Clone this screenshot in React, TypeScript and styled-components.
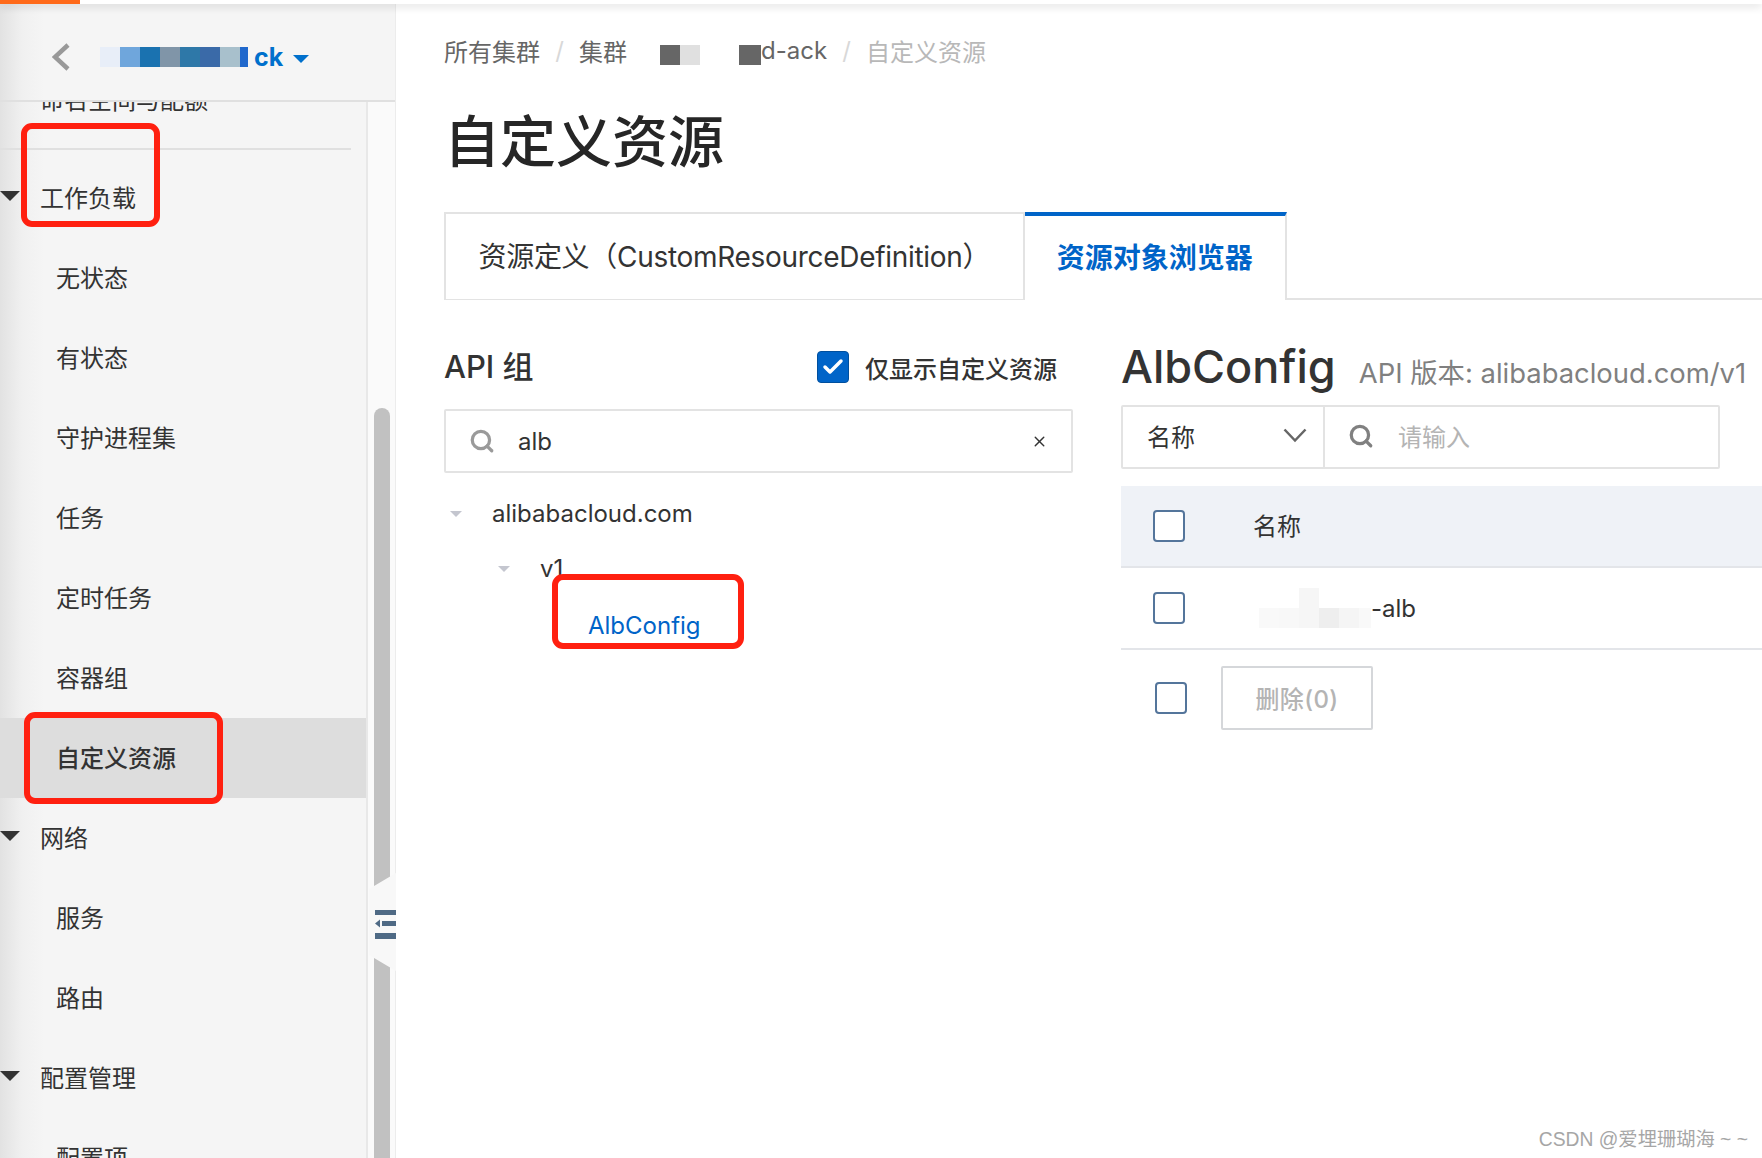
import React from 'react';
import styled, { createGlobalStyle } from 'styled-components';
import { Check, Search, X } from 'lucide-react';

const GlobalStyle = createGlobalStyle`
  html, body {
    margin: 0;
    padding: 0;
    background: #fff;
    font-family: Inter, "Noto Sans CJK SC", sans-serif;
    color: #333;
  }
  * {
    box-sizing: border-box;
  }
`;

const Page = styled.div`
  position: relative;
  display: flex;
  flex-direction: column;
  width: 1762px;
  height: 1158px;
  overflow: hidden;
`;

const TopStrip = styled.div`
  position: relative;
  z-index: 2;
  flex: none;
  height: 4px;
  background: #fff;
  box-shadow: 0 2px 8px rgba(0, 0, 0, 0.18);
`;

const TopAccent = styled.div`
  width: 80px;
  height: 4px;
  background: #ff6a1a;
`;

const Body = styled.div`
  flex: 1;
  display: flex;
  min-height: 0;
`;

const Sidebar = styled.aside`
  position: relative;
  flex: none;
  display: flex;
  flex-direction: column;
  width: 396px;
  background: linear-gradient(90deg, #e2e2e2 0, #f0f0f0 22px, #f5f5f5 44px);
  border-right: 1px solid #ececec;
`;

const SideHeader = styled.div`
  flex: none;
  display: flex;
  align-items: center;
  gap: 30px;
  height: 98px;
  padding: 9px 0 0 52px;
  border-bottom: 2px solid #e0e0e0;
`;

const ClusterName = styled.div`
  display: flex;
  align-items: center;
  height: 30px;
  color: #0070cc;
  font-size: 25px;
  font-weight: 700;
`;

const ClusterTail = styled.span`
  margin-left: 6px;
`;

const Mosaic = styled.span`
  display: inline-flex;
  align-items: flex-end;
  flex: none;
`;

const CrumbMosaic = styled(Mosaic)<{ $gap: number }>`
  margin: 10px 0 0 ${p => p.$gap}px;
`;

const Cell = styled.i<{ $c: string; $w?: number; $h?: number }>`
  display: block;
  width: ${p => p.$w ?? 20}px;
  height: ${p => p.$h ?? 20}px;
  background: ${p => p.$c};
`;

const Caret = styled.svg`
  margin-left: 10px;
  margin-top: 4px;
`;

const SideBody = styled.div`
  flex: 1;
  display: flex;
  min-height: 0;
`;

const MenuColumn = styled.nav`
  flex: none;
  width: 368px;
  overflow: hidden;
  border-right: 2px solid #e8e8e8;
`;

const MenuList = styled.div`
  margin-top: -42px;
`;

const MenuItem = styled.div<{ $level: number; $active?: boolean }>`
  position: relative;
  display: flex;
  align-items: center;
  height: 80px;
  padding: 0 0 3px ${p => (p.$level === 0 ? 40 : 56)}px;
  font-size: 24px;
  font-weight: ${p => (p.$active ? 500 : 400)};
  color: #333;
  background: ${p => (p.$active ? '#dddddd' : 'transparent')};
`;

const MenuArrow = styled.span`
  position: absolute;
  left: 0;
  top: 33px;
  width: 0;
  height: 0;
  border-left: 10px solid transparent;
  border-right: 10px solid transparent;
  border-top: 10px solid #333;
`;

const MenuDivider = styled.div`
  height: 2px;
  width: 351px;
  margin: 8px 0;
  background: #e0e0e0;
`;

const ScrollTrack = styled.div`
  flex: 1;
  padding: 306px 5px 0 6px;
  background: #fafafa;
`;

const ScrollThumb = styled.div`
  height: 800px;
  border-radius: 8px 8px 0 0;
  background: #c1c1c1;
`;

const CollapseHandle = styled.div`
  position: absolute;
  left: 369px;
  top: 869px;
  display: flex;
  align-items: center;
  justify-content: flex-end;
  width: 27px;
  height: 98px;
  padding-top: 5px;
  background: #f8f8f8;
  clip-path: polygon(0 16px, 100% 0, 100% 100%, 0 82px);
`;

const Main = styled.main`
  flex: 1;
  min-width: 0;
  overflow: hidden;
  padding: 29px 0 0 48px;
`;

const Breadcrumb = styled.div`
  display: flex;
  align-items: center;
  height: 34px;
  font-size: 24px;
  color: #666;
  white-space: nowrap;
`;

const Slash = styled.span`
  width: 39px;
  text-align: center;
  color: #d8d8d8;
`;

const CrumbCurrent = styled.span`
  color: #b8b8b8;
`;

const PageTitle = styled.h1`
  margin: 40px 0 0;
  height: 70px;
  font-size: 56px;
  line-height: 70px;
  font-weight: 500;
  color: #262626;
`;

const Tabs = styled.div`
  display: flex;
  height: 88px;
  margin-top: 35px;
  border-bottom: 2px solid #e3e3e3;
`;

const Tab = styled.div<{ $active?: boolean }>`
  display: flex;
  align-items: center;
  height: ${p => (p.$active ? 88 : 87)}px;
  padding: 0 ${p => (p.$active ? 32 : 32.5)}px 4px;
  font-size: 28px;
  font-weight: ${p => (p.$active ? 600 : 400)};
  letter-spacing: ${p => (p.$active ? 0 : -0.3)}px;
  color: ${p => (p.$active ? '#0064c8' : '#333')};
  background: #fff;
  white-space: nowrap;
  border: solid #e3e3e3;
  border-width: ${p => (p.$active ? '4px 2px 0 0' : '2px 2px 0 2px')};
  border-top-color: ${p => (p.$active ? '#0064c8' : '#e3e3e3')};
`;

const Panels = styled.div`
  display: flex;
  gap: 48px;
  margin-top: 38px;
`;

const LeftPanel = styled.section`
  flex: none;
  width: 629px;
`;

const RightPanel = styled.section`
  flex: 1;
  min-width: 0;
`;

const GroupHeader = styled.div`
  display: flex;
  align-items: center;
  justify-content: space-between;
  height: 54px;
  padding-right: 16px;
`;

const GroupTitle = styled.h2`
  margin: 0 0 2px;
  font-size: 31px;
  font-weight: 500;
  color: #333;
`;

const OnlyCustom = styled.div`
  display: flex;
  align-items: center;
  gap: 16px;
  margin-top: 4px;
  font-size: 24px;
  font-weight: 500;
`;

const CheckedBox = styled.span`
  display: flex;
  align-items: center;
  justify-content: center;
  width: 32px;
  height: 32px;
  border-radius: 4px;
  background: #0064c8;
  border: 1px solid #004f9e;
  color: #fff;
`;

const SearchBox = styled.div`
  display: flex;
  align-items: center;
  height: 64px;
  margin-top: 17px;
  padding: 0 23px;
  border: 2px solid #e3e3e3;
  border-radius: 2px;
  color: #9a9a9a;
`;

const SearchValue = styled.span`
  flex: 1;
  margin-left: 23px;
  color: #333;
  font-size: 24px;
`;

const Tree = styled.div`
  margin-top: 13px;
`;

const TreeRow = styled.div<{ $level: number; $link?: boolean }>`
  display: flex;
  align-items: center;
  height: ${p => (p.$link ? 58 : 55)}px;
  margin-left: ${p => p.$level * 48}px;
  font-size: 24px;
  color: ${p => (p.$link ? '#0064c8' : '#333')};
`;

const TreeArrow = styled.span`
  flex: none;
  width: 0;
  height: 0;
  margin: 0 30px 0 6px;
  border-left: 6px solid transparent;
  border-right: 6px solid transparent;
  border-top: 6px solid #c4c6cf;
`;

const TitleRow = styled.div`
  display: flex;
  align-items: baseline;
  gap: 23px;
  height: 54px;
  padding-top: 2px;
  white-space: nowrap;
`;

const ObjectTitle = styled.h2`
  margin: 0;
  font-size: 45px;
  line-height: 54px;
  font-weight: 500;
  color: #333;
`;

const ApiVersion = styled.span`
  font-size: 27.4px;
  color: #808080;
`;

const FilterBar = styled.div`
  display: flex;
  width: 599px;
  height: 64px;
  margin-top: 13px;
  border: 2px solid #e3e3e3;
  border-radius: 2px;
  font-size: 24px;
`;

const FilterSelect = styled.div`
  flex: none;
  display: flex;
  align-items: center;
  justify-content: space-between;
  width: 202px;
  padding: 0 16px 3px 24px;
  border-right: 2px solid #e3e3e3;
  color: #333;
`;

const FilterInput = styled.div`
  flex: 1;
  display: flex;
  align-items: center;
  gap: 24px;
  padding: 0 0 3px 23px;
  color: #b4b4b4;
`;

const Table = styled.div`
  margin-top: 17px;
`;

const TableRow = styled.div<{ $head?: boolean }>`
  display: flex;
  align-items: center;
  height: 82px;
  padding-left: 32px;
  font-size: 24px;
  background: ${p => (p.$head ? '#eff2f7' : '#fff')};
  border-bottom: 2px solid #e3e5e9;
`;

const Box = styled.span`
  flex: none;
  display: block;
  width: 32px;
  height: 32px;
  border: 2px solid #54759b;
  border-radius: 4px;
  background: #fff;
`;

const NameCell = styled.span<{ $tight?: boolean }>`
  display: flex;
  align-items: center;
  margin-left: ${p => (p.$tight ? 74 : 68)}px;
  margin-bottom: ${p => (p.$tight ? 0 : 4)}px;
`;

const BulkBar = styled.div`
  display: flex;
  align-items: center;
  gap: 34px;
  height: 64px;
  margin-top: 16px;
  padding-left: 34px;
`;

const DeleteButton = styled.button`
  width: 152px;
  height: 64px;
  padding: 0 0 2px;
  background: #fff;
  border: 2px solid #d5d7da;
  border-radius: 2px;
  font: inherit;
  font-size: 24px;
  font-weight: 500;
  letter-spacing: 0.4px;
  color: #b4b4b4;
`;

const RedBox = styled.div<{ $x: number; $y: number; $w: number; $h: number }>`
  position: absolute;
  left: ${p => p.$x}px;
  top: ${p => p.$y}px;
  width: ${p => p.$w}px;
  height: ${p => p.$h}px;
  border: 6px solid #ff2010;
  border-radius: 11px;
`;

const Watermark = styled.div`
  position: absolute;
  right: 14px;
  bottom: 6px;
  font-family: "Liberation Sans", "Noto Sans CJK SC", sans-serif;
  font-size: 19.3px;
  color: #a6a6a6;
`;

const CLUSTER_CELLS = ['#e8eef8', '#6fa6dc', '#1a72b0', '#8095a8', '#2e78a8', '#3a6aa8', '#a8c0cc'];

const MENU: { label: string; level: number; arrow?: boolean; active?: boolean; divider?: boolean }[] = [
  { label: '命名空间与配额', level: 0, divider: true },
  { label: '工作负载', level: 0, arrow: true },
  { label: '无状态', level: 1 },
  { label: '有状态', level: 1 },
  { label: '守护进程集', level: 1 },
  { label: '任务', level: 1 },
  { label: '定时任务', level: 1 },
  { label: '容器组', level: 1 },
  { label: '自定义资源', level: 1, active: true },
  { label: '网络', level: 0, arrow: true },
  { label: '服务', level: 1 },
  { label: '路由', level: 1 },
  { label: '配置管理', level: 0, arrow: true },
  { label: '配置项', level: 1 },
];

const App: React.FC = () => {
  return (
    <Page>
      <GlobalStyle />
      <TopStrip>
        <TopAccent />
      </TopStrip>
      <Body>
        <Sidebar>
          <SideHeader>
            <svg width="18" height="28" viewBox="0 0 18 28" fill="none">
              <path d="M16 2 3 14l13 12" stroke="#999" strokeWidth="4.5" />
            </svg>
            <ClusterName>
              <Mosaic>
                {CLUSTER_CELLS.map(c => (
                  <Cell key={c} $c={c} />
                ))}
                <Cell $c="#2068cc" $w={8} />
              </Mosaic>
              <ClusterTail>ck</ClusterTail>
              <Caret width="16" height="8" viewBox="0 0 16 8">
                <path d="M0 0h16L8 8z" fill="#0070cc" />
              </Caret>
            </ClusterName>
          </SideHeader>
          <SideBody>
            <MenuColumn>
              <MenuList>
                {MENU.map(item => (
                  <React.Fragment key={item.label}>
                    <MenuItem $level={item.level} $active={item.active}>
                      {item.arrow && <MenuArrow />}
                      {item.label}
                    </MenuItem>
                    {item.divider && <MenuDivider />}
                  </React.Fragment>
                ))}
              </MenuList>
            </MenuColumn>
            <ScrollTrack>
              <ScrollThumb />
            </ScrollTrack>
          </SideBody>
          <CollapseHandle>
            <svg width="21" height="29" viewBox="0 0 21 29" fill="#4f6a85">
              <path d="M0 0h21v5H0zM0 23h21v6H0zM7 11h14v5H7zM0 13.500 5 9.500v8z" />
            </svg>
          </CollapseHandle>
        </Sidebar>
        <Main>
          <Breadcrumb>
            <span>所有集群</span>
            <Slash>/</Slash>
            <span>集群</span>
            <CrumbMosaic $gap={33}>
              <Cell $c="#666" />
              <Cell $c="#e0e0e0" />
            </CrumbMosaic>
            <CrumbMosaic $gap={39}>
              <Cell $c="#666" $w={22} />
            </CrumbMosaic>
            <span>d-ack</span>
            <Slash>/</Slash>
            <CrumbCurrent>自定义资源</CrumbCurrent>
          </Breadcrumb>
          <PageTitle>自定义资源</PageTitle>
          <Tabs>
            <Tab>资源定义（CustomResourceDefinition）</Tab>
            <Tab $active>资源对象浏览器</Tab>
          </Tabs>
          <Panels>
            <LeftPanel>
              <GroupHeader>
                <GroupTitle>API 组</GroupTitle>
                <OnlyCustom>
                  <CheckedBox>
                    <Check size={24} strokeWidth={3.5} />
                  </CheckedBox>
                  仅显示自定义资源
                </OnlyCustom>
              </GroupHeader>
              <SearchBox>
                <Search size={26} strokeWidth={3} />
                <SearchValue>alb</SearchValue>
                <X size={17} color="#333" />
              </SearchBox>
              <Tree>
                <TreeRow $level={0}>
                  <TreeArrow />
                  alibabacloud.com
                </TreeRow>
                <TreeRow $level={1}>
                  <TreeArrow />
                  v1
                </TreeRow>
                <TreeRow $level={3} $link>
                  AlbConfig
                </TreeRow>
              </Tree>
            </LeftPanel>
            <RightPanel>
              <TitleRow>
                <ObjectTitle>AlbConfig</ObjectTitle>
                <ApiVersion>API 版本: alibabacloud.com/v1</ApiVersion>
              </TitleRow>
              <FilterBar>
                <FilterSelect>
                  名称
                  <svg width="24" height="15" viewBox="0 0 24 15" fill="none">
                    <path d="M1.500 1.500 12 12.500 22.500 1.500" stroke="#666" strokeWidth="2.5" />
                  </svg>
                </FilterSelect>
                <FilterInput>
                  <Search size={26} color="#808080" strokeWidth={3} />
                  请输入
                </FilterInput>
              </FilterBar>
              <Table>
                <TableRow $head>
                  <Box />
                  <NameCell>名称</NameCell>
                </TableRow>
                <TableRow>
                  <Box />
                  <NameCell $tight>
                    <Mosaic>
                      <Cell $c="#f9f9f9" />
                      <Cell $c="#f8f8f8" />
                      <Cell $c="#f6f6f6" $h={40} />
                      <Cell $c="#eeeeee" />
                      <Cell $c="#f5f5f5" />
                      <Cell $c="#f9f9f9" $w={12} />
                    </Mosaic>
                    -alb
                  </NameCell>
                </TableRow>
              </Table>
              <BulkBar>
                <Box />
                <DeleteButton>删除(0)</DeleteButton>
              </BulkBar>
            </RightPanel>
          </Panels>
        </Main>
      </Body>
      <RedBox $x={21} $y={123} $w={139} $h={104} />
      <RedBox $x={24} $y={712} $w={199} $h={92} />
      <RedBox $x={552} $y={574} $w={192} $h={75} />
      <Watermark>CSDN @爱埋珊瑚海 ~ ~</Watermark>
    </Page>
  );
};

export default App;
